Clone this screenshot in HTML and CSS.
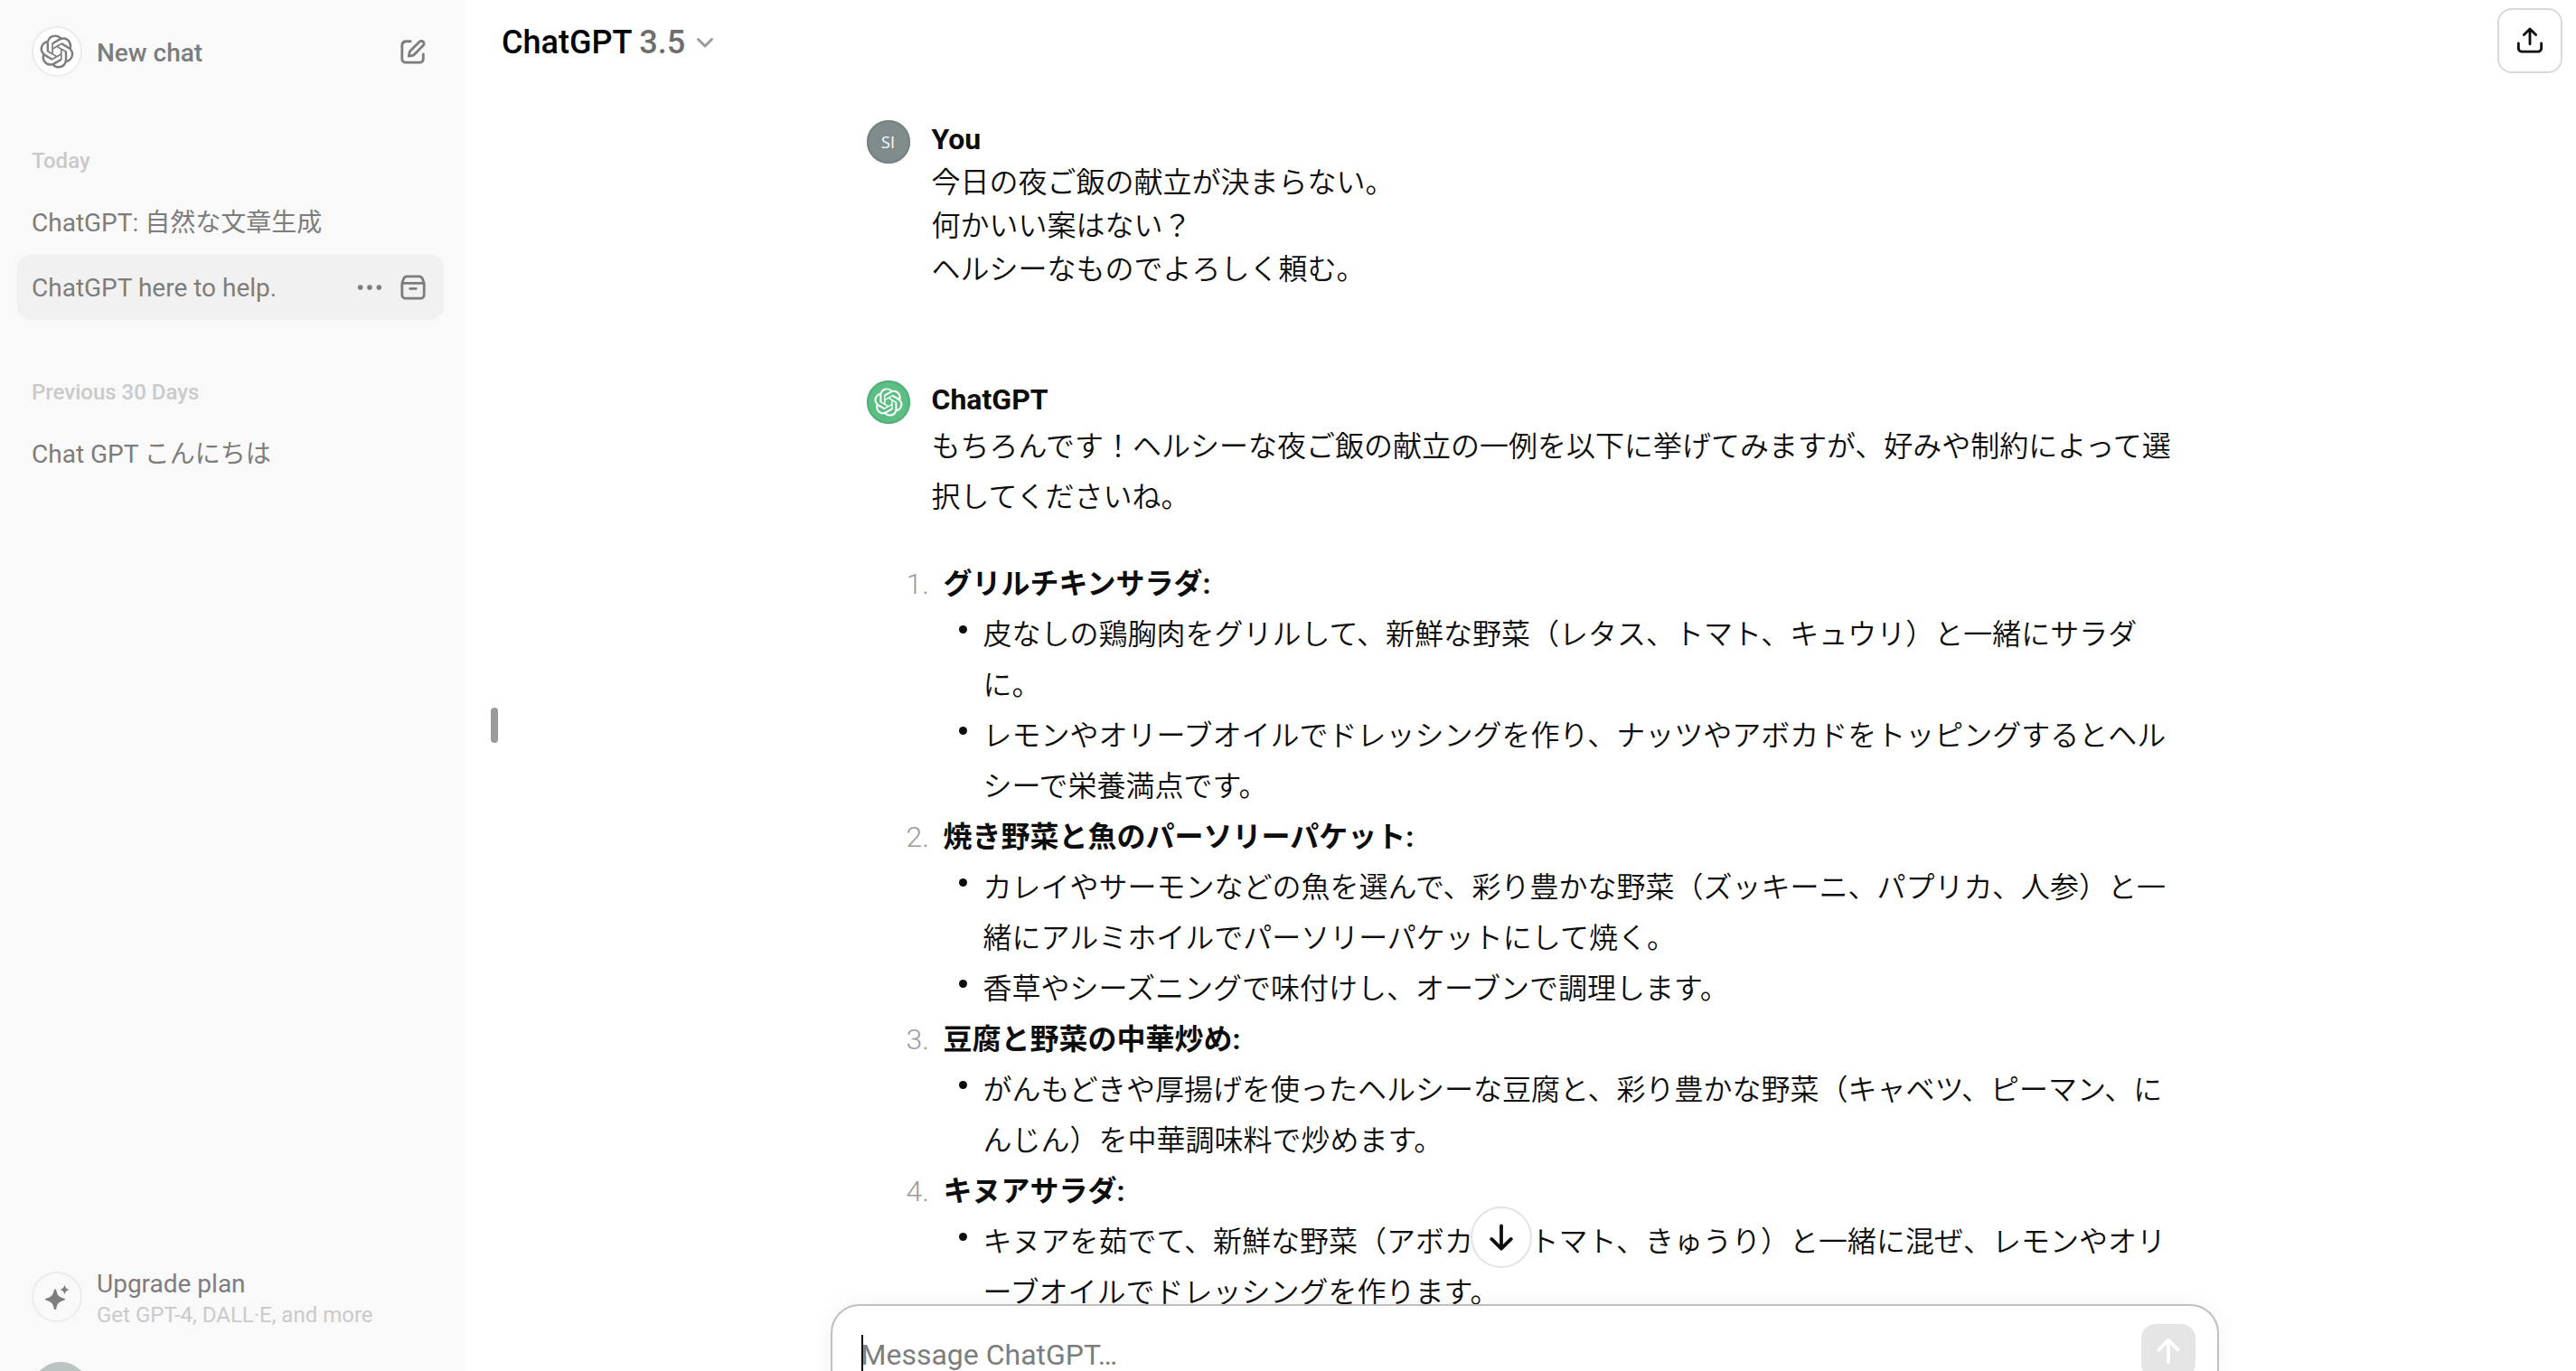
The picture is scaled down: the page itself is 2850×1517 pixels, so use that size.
FILE: index.html
```html
<!DOCTYPE html>
<html lang="ja">
<head>
<meta charset="utf-8">
<title>ChatGPT</title>
<link rel="stylesheet" href="styles.css">
</head>
<body>
<svg class="defs" aria-hidden="true">
  <symbol id="logo" viewBox="0 0 41 41"><path fill="currentColor" d="M37.532 16.87a9.963 9.963 0 0 0-.856-8.184 10.078 10.078 0 0 0-10.855-4.835A9.964 9.964 0 0 0 18.306.5a10.079 10.079 0 0 0-9.614 6.977 9.967 9.967 0 0 0-6.664 4.834 10.08 10.08 0 0 0 1.24 11.817 9.965 9.965 0 0 0 .856 8.185 10.079 10.079 0 0 0 10.855 4.835 9.965 9.965 0 0 0 7.516 3.35 10.078 10.078 0 0 0 9.617-6.981 9.967 9.967 0 0 0 6.663-4.834 10.079 10.079 0 0 0-1.243-11.813zM22.498 37.886a7.474 7.474 0 0 1-4.799-1.735c.061-.033.168-.091.237-.134l7.964-4.6a1.294 1.294 0 0 0 .655-1.134V19.054l3.366 1.944a.12.12 0 0 1 .066.092v9.299a7.505 7.505 0 0 1-7.49 7.496zM6.392 31.006a7.471 7.471 0 0 1-.894-5.023c.06.036.162.099.237.141l7.964 4.6a1.297 1.297 0 0 0 1.308 0l9.724-5.614v3.888a.12.12 0 0 1-.048.103l-8.051 4.649a7.504 7.504 0 0 1-10.24-2.744zM4.297 13.62A7.469 7.469 0 0 1 8.2 10.333c0 .068-.004.19-.004.274v9.201a1.294 1.294 0 0 0 .654 1.132l9.723 5.614-3.366 1.944a.12.12 0 0 1-.114.01L7.04 23.856a7.504 7.504 0 0 1-2.743-10.237zm27.658 6.437l-9.724-5.615 3.367-1.943a.121.121 0 0 1 .113-.01l8.052 4.648a7.498 7.498 0 0 1-1.158 13.528v-9.476a1.293 1.293 0 0 0-.65-1.132zm3.35-5.043c-.059-.037-.162-.099-.236-.141l-7.965-4.6a1.298 1.298 0 0 0-1.308 0l-9.723 5.614v-3.888a.12.12 0 0 1 .048-.103l8.05-4.645a7.497 7.497 0 0 1 11.135 7.763zm-21.063 6.929l-3.367-1.944a.12.12 0 0 1-.065-.092v-9.299a7.497 7.497 0 0 1 12.293-5.756 6.94 6.94 0 0 0-.236.134l-7.965 4.6a1.294 1.294 0 0 0-.654 1.132l-.006 11.225zm1.829-3.943l4.33-2.501 4.332 2.5v5l-4.331 2.5-4.331-2.5V18z"/></symbol>
</svg>
<div class="app">
  <nav class="sidebar">
    <a class="new-chat" href="#">
      <span class="disc disc-white"><svg class="logo-md"><use href="#logo"/></svg></span>
      <span class="new-chat-label">New chat</span>
      <svg class="icon" viewBox="0 0 32 32"><path d="M13 4H8a5 5 0 0 0-5 4v17a4 4 0 0 0 4 4h17a4 4 0 0 0 4-4v-6M23.500 4.500a3 3 0 0 1 4.500 4.300L17.500 19.500a4 4 0 0 1-2 1.200l-4.500.800.800-4.500a4 4 0 0 1 1.200-2z"/></svg>
    </a>
    <section class="group">
      <h2 class="group-title">Today</h2>
      <a class="chat" href="#"><span class="chat-link">ChatGPT: 自然な文章生成</span></a>
      <div class="chat chat-active">
        <a class="chat-link" href="#">ChatGPT here to help.</a>
        <button class="plain" type="button" aria-label="More"><svg class="icon" viewBox="0 0 32 32"><g class="fill"><circle cx="5" cy="16" r="3"/><circle cx="16" cy="16" r="3"/><circle cx="27" cy="16" r="3"/></g></svg></button>
        <button class="plain" type="button" aria-label="Archive"><svg class="icon" viewBox="0 0 32 32"><path d="M3 11v14a4 4 0 0 0 4 4h18a4 4 0 0 0 4-4V11zM3 11l2-5.500A4 4 0 0 1 8.500 3h15A4 4 0 0 1 27 5.500l2 5.500M12.500 17.500h7"/></svg></button>
      </div>
    </section>
    <section class="group">
      <h2 class="group-title">Previous 30 Days</h2>
      <a class="chat" href="#"><span class="chat-link">Chat GPT こんにちは</span></a>
    </section>
    <div class="sidebar-foot">
      <a class="upgrade" href="#">
        <span class="disc"><svg class="icon" viewBox="0 0 32 32"><g class="fill"><path d="M14 7.500c.8 0 1 .5 1.300 1.500 1.200 5.200 3 7.200 8 8.500 1 .3 1.700.6 1.700 1.300s-.7 1-1.700 1.300c-5 1.300-6.800 3.300-8 8.400-.3 1-.5 1.500-1.300 1.500s-1-.5-1.300-1.500c-1.200-5.100-3-7.100-8-8.400-1-.3-1.700-.6-1.700-1.300s.7-1 1.700-1.300c5-1.300 6.800-3.300 8-8.500.3-1 .5-1.500 1.300-1.500z"/><path d="M24.500 2.500c.9 3.600 1.700 4.600 5.500 5.500-3.800.9-4.600 1.900-5.500 5.500-.9-3.600-1.700-4.600-5.500-5.500 3.800-.9 4.600-1.900 5.500-5.500z"/></g></svg></span>
        <span class="upgrade-text"><span>Upgrade plan</span><small>Get GPT-4, DALL·E, and more</small></span>
      </a>
      <span class="account"></span>
    </div>
  </nav>

  <main class="main">
    <header class="topbar">
      <button class="model" type="button">ChatGPT <span class="version">3.5</span><svg class="chevron" viewBox="0 0 20 20"><path d="M2.500 6.500l7.500 7.500 7.500-7.500"/></svg></button>
      <button class="share" type="button" aria-label="Share"><svg class="icon" viewBox="0 0 32 32"><path d="M2.500 19v6a4 4 0 0 0 4 4h19a4 4 0 0 0 4-4v-6M16 20V2.500M9 9l7-6.800L23 9"/></svg></button>
    </header>
    <button class="handle" type="button" aria-label="Close sidebar"></button>

    <div class="thread">
      <article class="turn">
        <span class="avatar avatar-user">SI</span>
        <div class="body">
          <h3 class="author">You</h3>
          <p class="user-text">今日の夜ご飯の献立が決まらない。<br>何かいい案はない？<br>ヘルシーなものでよろしく頼む。</p>
        </div>
      </article>
      <article class="turn">
        <span class="avatar avatar-bot"><svg class="logo-sm"><use href="#logo"/></svg></span>
        <div class="body">
          <h3 class="author">ChatGPT</h3>
          <div class="reply">
            <p>もちろんです！ヘルシーな夜ご飯の献立の一例を以下に挙げてみますが、好みや制約によって選択してくださいね。</p>
            <ol class="menu">
              <li><strong>グリルチキンサラダ:</strong>
                <ul>
                  <li>皮なしの鶏胸肉をグリルして、新鮮な野菜（レタス、トマト、キュウリ）と一緒にサラダに。</li>
                  <li>レモンやオリーブオイルでドレッシングを作り、ナッツやアボカドをトッピングするとヘルシーで栄養満点です。</li>
                </ul>
              </li>
              <li><strong>焼き野菜と魚のパーソリーパケット:</strong>
                <ul>
                  <li>カレイやサーモンなどの魚を選んで、彩り豊かな野菜（ズッキーニ、パプリカ、人参）と一緒にアルミホイルでパーソリーパケットにして焼く。</li>
                  <li>香草やシーズニングで味付けし、オーブンで調理します。</li>
                </ul>
              </li>
              <li><strong>豆腐と野菜の中華炒め:</strong>
                <ul>
                  <li>がんもどきや厚揚げを使ったヘルシーな豆腐と、彩り豊かな野菜（キャベツ、ピーマン、にんじん）を中華調味料で炒めます。</li>
                </ul>
              </li>
              <li><strong>キヌアサラダ:</strong>
                <ul>
                  <li>キヌアを茹でて、新鮮な野菜（アボカド、トマト、きゅうり）と一緒に混ぜ、レモンやオリーブオイルでドレッシングを作ります。</li>
                </ul>
              </li>
            </ol>
          </div>
        </div>
      </article>
    </div>

    <div class="dock">
      <button class="to-bottom" type="button" aria-label="Scroll to bottom"><svg class="icon" viewBox="0 0 32 32"><path d="M16 2.500V29M4.500 18L16 29.500 27.500 18"/></svg></button>
      <form class="composer">
        <span class="caret"></span>
        <textarea class="prompt" placeholder="Message ChatGPT…" aria-label="Message ChatGPT"></textarea>
        <button class="send" type="button" aria-label="Send"><svg class="icon" viewBox="0 0 32 32"><path d="M16 29V3M4.500 14.500L16 2.800l11.500 11.700"/></svg></button>
      </form>
    </div>
  </main>
</div>
</body>
</html>
```
FILE: styles.css
```css
* { box-sizing: border-box; }
body {
  margin: 0;
  overflow: hidden;
  font-family: Roboto, "Noto Sans CJK JP", sans-serif;
  font-size: 32px;
  color: #0d0d0d;
  background: #fff;
}
h2, h3, p, ol, ul { margin: 0; padding: 0; }
a { color: inherit; text-decoration: none; }
button { font: inherit; color: inherit; padding: 0; border: 0; background: none; cursor: pointer; }
.defs { display: none; }
.icon { display: block; width: 32px; height: 32px; fill: none; stroke: currentColor; stroke-width: 3; stroke-linecap: round; stroke-linejoin: round; }
.fill { fill: currentColor; stroke: none; }

.app { display: flex; height: 100vh; }

/* Sidebar */
.sidebar {
  display: flex;
  flex-direction: column;
  flex: 0 0 515px;
  padding: 20px 24px 0 19px;
  font-size: 28px;
  line-height: 40px;
  color: #7d7d7d;
  background: #f9f9f9;
}
.new-chat { display: flex; align-items: center; gap: 16px; height: 74px; padding: 0 19px 0 16px; font-weight: 500; }
.new-chat-label { flex: 1; padding-top: 4px; }
.disc { display: flex; align-items: center; justify-content: center; flex: none; width: 56px; height: 56px; border: 2px solid #ececec; border-radius: 50%; }
.disc-white { background: #fff; }
.logo-md { width: 38px; height: 38px; }
.group { padding-top: 64px; }
.group + .group { padding-top: 60px; }
.group-title { height: 52px; padding-left: 16px; font-size: 24px; font-weight: 500; color: #cacaca; }
.chat { display: flex; align-items: center; gap: 18px; height: 72px; padding: 0 19px 0 16px; border-radius: 16px; }
.chat-active { background: #f1f1f1; }
.chat-link { flex: 1; padding-top: 2px; }
.sidebar-foot { display: flex; flex-direction: column; gap: 44px; height: 110px; margin-top: auto; padding-left: 16px; }
.upgrade { display: flex; align-items: center; flex: none; gap: 16px; height: 56px; }
.upgrade-text { display: flex; flex-direction: column; padding-top: 4px; }
.upgrade-text span { line-height: 36px; }
.upgrade-text small { font-size: 24px; line-height: 32px; color: #cacaca; }
.account { flex: none; width: 64px; height: 64px; border-radius: 50%; background: #bcc4c3; }
.new-chat .icon, .plain .icon { width: 30px; height: 30px; }

/* Conversation */
.main { position: relative; display: flex; flex-direction: column; flex: 1; min-width: 0; padding-left: 8px; }
.topbar { display: flex; align-items: center; justify-content: space-between; flex: none; height: 90px; padding: 0 15px 0 32px; }
.model { display: flex; align-items: center; gap: 8px; padding-top: 4px; font-size: 36px; font-weight: 500; color: #000; }
.version { color: #6e6e6e; }
.chevron { width: 20px; height: 20px; margin-left: 4px; fill: none; stroke: #9b9b9b; stroke-width: 3; stroke-linecap: round; stroke-linejoin: round; }
.share { display: flex; align-items: center; justify-content: center; width: 72px; height: 72px; border: 2px solid #d9d9d9; border-radius: 16px; }
.share .icon { width: 30px; height: 30px; }
.handle { position: absolute; top: calc(50% + 24px); left: 28px; width: 8px; height: 39px; border-radius: 4px; background: #9b9b9b; }

.thread { flex: 1; min-height: 0; overflow: hidden; padding-top: 40px; }
.turn { display: flex; gap: 24px; width: 100%; max-width: 1536px; margin: 0 auto 96px; padding: 0 40px; }
.avatar { display: flex; align-items: center; justify-content: center; flex: none; width: 48px; height: 48px; margin-top: 3px; border-radius: 50%; color: #fff; }
.avatar-user { font-family: "Open Sans", sans-serif; font-size: 18px; background: #7f8c8b; box-shadow: inset 0 0 0 2px #75817f; }
.avatar-bot { background: #5bbf84; box-shadow: inset 0 0 0 2px #53b07a; }
.logo-sm { width: 32px; height: 32px; }
.body { flex: 1; min-width: 0; font-weight: 350; line-height: 48px; }
.author { font-size: 32px; font-weight: 700; }
.reply { line-height: 56px; }
.menu { margin-top: 40px; padding-left: 13px; }
.menu > li::marker { content: counter(list-item) ".\00a0\00a0"; color: #9b9b9b; }
.menu strong { font-weight: 700; }
.menu ul { padding-left: 44px; list-style: none; }
.menu ul li { position: relative; }
.menu ul li::before { content: ""; position: absolute; top: 18px; left: -27px; width: 9px; height: 9px; border-radius: 50%; background: #0d0d0d; }

/* Message box */
.dock { position: relative; flex: none; height: 74px; }
.to-bottom { position: absolute; top: -108px; left: calc(50% - 60px); display: flex; align-items: center; justify-content: center; width: 68px; height: 68px; border: 2px solid #e3e3e3; border-radius: 50%; background: #fff; }
.to-bottom .icon, .send .icon { width: 30px; height: 30px; stroke-width: 4; }
.composer { position: relative; display: flex; width: 100%; max-width: 1536px; height: 104px; margin: 0 auto; padding: 20px 24px 20px 32px; border: 2px solid #c0c0c0; border-radius: 32px; background: #fff; box-shadow: 0 0 24px rgba(0, 0, 0, .05); }
.prompt { flex: 1; height: 64px; padding: 10px 0 0; border: 0; outline: 0; resize: none; font: inherit; line-height: 48px; background: none; }
.prompt::placeholder { color: #7d7d7d; opacity: 1; }
.caret { position: absolute; top: 32px; left: 32px; width: 2px; height: 44px; background: #000; }
.send { display: flex; align-items: center; justify-content: center; width: 60px; height: 60px; border-radius: 16px; color: #fff; background: #e5e5e5; }
```
